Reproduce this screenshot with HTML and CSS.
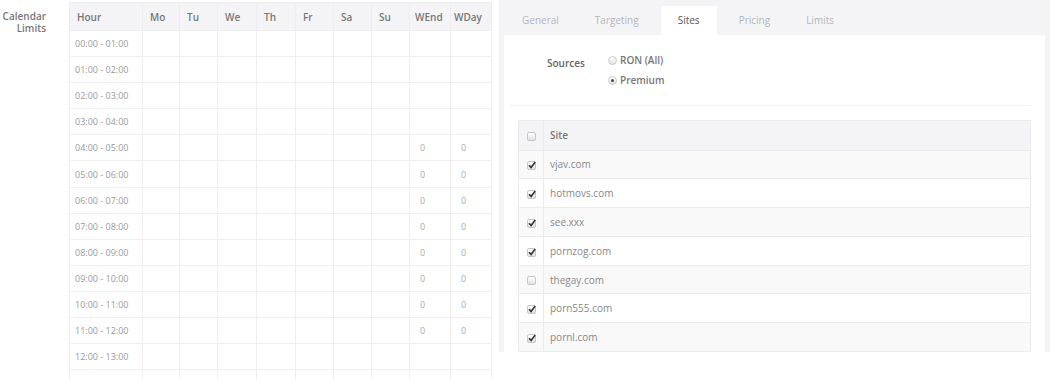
FILE: index.html
```html
<!DOCTYPE html>
<html lang="en">
<head>
    <meta charset="UTF-8">
    <meta name="viewport" content="width=device-width, initial-scale=1.0">
    <title>Campaign - Sites</title>
    <link rel="stylesheet" href="styles.css">
</head>
<body>
    <div class="limits-label">Calendar<br>Limits</div>

    <table class="calendar">
        <colgroup>
            <col style="width:73px"><col style="width:37px"><col style="width:38px"><col style="width:39px">
            <col style="width:39px"><col style="width:38px"><col style="width:38px"><col style="width:38px">
            <col style="width:41px"><col style="width:41px">
        </colgroup>
        <thead>
            <tr>
                <th>Hour</th><th>Mo</th><th>Tu</th><th>We</th><th>Th</th><th>Fr</th><th>Sa</th><th>Su</th>
                <th class="wend">WEnd</th><th class="wday">WDay</th>
            </tr>
        </thead>
        <tbody id="calendarBody"></tbody>
    </table>

    <div class="panel">
        <div class="tabs">
            <div class="tab">General</div>
            <div class="tab">Targeting</div>
            <div class="tab active">Sites</div>
            <div class="tab">Pricing</div>
            <div class="tab">Limits</div>
        </div>
        <div class="panel-body">
            <div class="sources">
                <div class="sources-label">Sources</div>
                <div class="radio-group">
                    <label class="radio-row"><span class="radio"></span>RON (All)</label>
                    <label class="radio-row"><span class="radio selected"></span>Premium</label>
                </div>
            </div>
            <div class="separator"></div>
            <table class="sites">
                <thead>
                    <tr><th class="cb-cell"><span class="cb"></span></th><th>Site</th></tr>
                </thead>
                <tbody id="sitesBody"></tbody>
            </table>
        </div>
    </div>

    <script>
        const calendarBody = document.getElementById('calendarBody');
        const pad = function(n) { return (n < 10 ? '0' : '') + n + ':00'; };
        for (let h = 0; h < 14; h++) {
            const tr = document.createElement('tr');
            // last row only peeks in at the bottom edge, its label is below the fold
            const label = h < 13 ? pad(h) + ' - ' + pad(h + 1) : '';
            let html = '<td class="hour">' + label + '</td>';
            for (let d = 0; d < 7; d++) { html += '<td></td>'; }
            const val = (h >= 4 && h <= 11) ? '0' : '';
            html += '<td class="num">' + val + '</td><td class="num">' + val + '</td>';
            tr.innerHTML = html;
            calendarBody.appendChild(tr);
        }

        const sites = [
            ['vjav.com', true], ['hotmovs.com', true], ['see.xxx', true], ['pornzog.com', true],
            ['thegay.com', false], ['porn555.com', true], ['pornl.com', true]
        ];
        const check = '<svg viewBox="0 0 10 10" width="10" height="10"><path d="M2 5.2 L4.1 7.4 L8.2 2" stroke="#333" stroke-width="1.6" fill="none"/></svg>';
        const sitesBody = document.getElementById('sitesBody');
        for (let i = 0; i < sites.length; i++) {
            const tr = document.createElement('tr');
            tr.innerHTML = '<td class="cb-cell"><span class="cb">' + (sites[i][1] ? check : '') + '</span></td><td>' + sites[i][0] + '</td>';
            sitesBody.appendChild(tr);
        }
    </script>
</body>
</html>
```

FILE: styles.css
```css
body {
    font-family: "Open Sans", "DejaVu Sans", sans-serif;
    margin: 0;
    display: flex;
    align-items: flex-start;
    background-color: #ffffff;
    color: #777;
    height: 380px;
    overflow: hidden;
}
.limits-label {
    width: 47px;
    margin-right: 23px;
    padding-top: 10px;
    text-align: right;
    font-size: 10px;
    font-weight: 600;
    line-height: 12px;
    color: #777;
}
.calendar {
    margin-top: 2px;
    border-collapse: collapse;
    table-layout: fixed;
    width: 422px;
}
.calendar th {
    height: 27px;
    padding: 0 0 0 7px;
    background-color: #f4f4f6;
    border: 1px solid #ededef;
    text-align: left;
    font-size: 10px;
    font-weight: 600;
    color: #777;
}
.calendar th.wend {
    padding-left: 5px;
}
.calendar th.wday {
    padding-left: 3px;
}
.calendar td {
    height: 25.1px;
    padding: 0 0 0 6px;
    border: 1px solid #efefef;
    font-size: 9px;
    color: #999;
}
.calendar td.hour {
    padding-left: 5px;
}
.calendar td.num {
    padding-left: 10px;
    color: #aaa;
}
.panel {
    width: 551px;
    margin-left: 7px;
    background-color: #f4f4f6;
}
.tabs {
    display: flex;
    align-items: flex-end;
    gap: 8px;
    height: 35px;
    padding-left: 9px;
}
.tab {
    height: 29px;
    line-height: 29px;
    padding: 0 14px;
    font-size: 10px;
    color: #b4b4bc;
}
.tab.active {
    padding: 0 17px;
    background-color: #ffffff;
    color: #555;
}
.panel-body {
    margin: 0 5px;
    background-color: #ffffff;
}
.sources {
    display: flex;
    padding: 15px 0 15px 43px;
}
.sources-label {
    width: 61px;
    padding-top: 3px;
    font-size: 10px;
    font-weight: 600;
    line-height: 20px;
    color: #666;
}
.radio-group {
    display: flex;
    flex-direction: column;
}
.radio-row {
    display: flex;
    align-items: center;
    gap: 3px;
    height: 20px;
    font-size: 10px;
    font-weight: 600;
    color: #777;
}
.radio {
    position: relative;
    width: 7px;
    height: 7px;
    border: 1px solid #c9c9c9;
    border-radius: 50%;
    background: linear-gradient(#ffffff, #e4e4e4);
}
.radio.selected::after {
    content: "";
    position: absolute;
    left: 2px;
    top: 2px;
    width: 3px;
    height: 3px;
    border-radius: 50%;
    background-color: #444;
}
.separator {
    height: 1px;
    margin: 0 14px 14px 6px;
    background-color: #f3f3f3;
}
.sites {
    margin: 0 14px;
    width: 513px;
    border-collapse: collapse;
}
.sites th {
    height: 28.5px;
    padding: 0 0 0 6px;
    background-color: #f4f4f6;
    border: 1px solid #ebebed;
    text-align: left;
    font-size: 10px;
    font-weight: 600;
    color: #777;
}
.sites td {
    height: 27.8px;
    padding: 0 0 0 6px;
    border: 1px solid #ececee;
    font-size: 10px;
    color: #888;
}
.sites tbody tr:nth-child(odd) td {
    background-color: #f9f9fa;
}
.sites .cb-cell {
    width: 24px;
    padding: 0;
    text-align: center;
}
.cb {
    position: relative;
    display: inline-block;
    vertical-align: middle;
    width: 7px;
    height: 7px;
    border: 1px solid #c6c6c6;
    border-radius: 2px;
    background: linear-gradient(#ffffff, #e2e2e2);
}
.cb svg {
    position: absolute;
    left: -1px;
    top: -2px;
}
```
